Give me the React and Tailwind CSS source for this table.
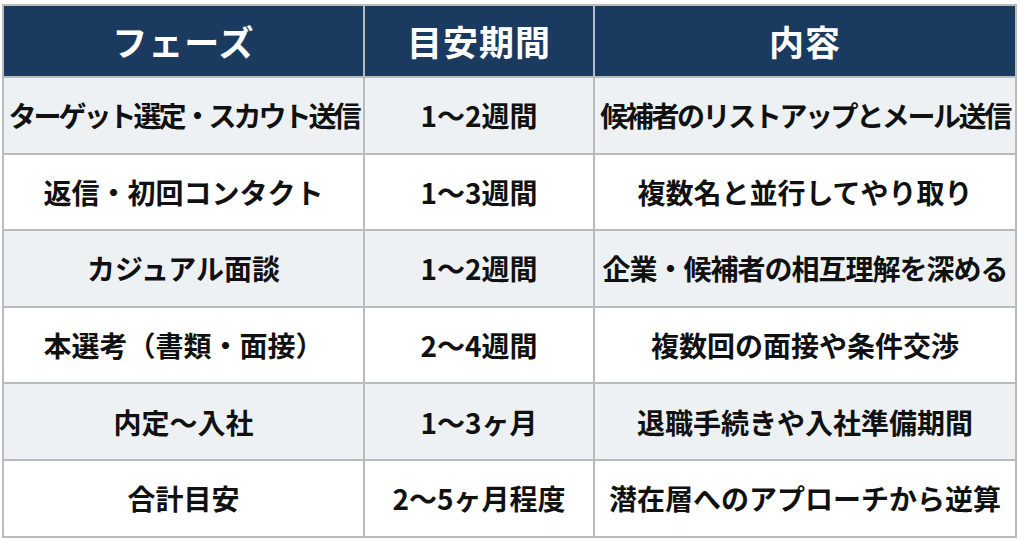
import React from "react";

const rows = [
  [
    ["ターゲット選定・スカウト送信", "tracking-[-3px]"],
    ["1〜2週間", ""],
    ["候補者のリストアップとメール送信", "tracking-[-2.4px]"],
  ],
  [
    ["返信・初回コンタクト", ""],
    ["1〜3週間", ""],
    ["複数名と並行してやり取り", ""],
  ],
  [
    ["カジュアル面談", ""],
    ["1〜2週間", ""],
    ["企業・候補者の相互理解を深める", "tracking-[-1px]"],
  ],
  [
    ["本選考（書類・面接）", ""],
    ["2〜4週間", ""],
    ["複数回の面接や条件交渉", ""],
  ],
  [
    ["内定〜入社", ""],
    ["1〜3ヶ月", ""],
    ["退職手続きや入社準備期間", ""],
  ],
  [
    ["合計目安", ""],
    ["2〜5ヶ月程度", ""],
    ["潜在層へのアプローチから逆算", ""],
  ],
];

export default function App() {
  return (
    <div
      className="w-[1024px] h-[539px] bg-white pt-[4px] pl-[2px] overflow-hidden"
      style={{ fontFamily: '"Noto Sans CJK JP", "Noto Sans", sans-serif' }}
    >
      <div className="w-[1015px] border-2 border-[#b9bcbf]">
        <div className="grid grid-cols-[361px_230px_420px] h-[70px] bg-[#1b3a5f] text-white font-bold text-[35px]">
          <div className="flex items-center justify-center border-r-2 border-[#b9bcbf] tracking-[1px]">フェーズ</div>
          <div className="flex items-center justify-center border-r-2 border-[#b9bcbf] tracking-[1px]">目安期間</div>
          <div className="flex items-center justify-center tracking-[1px]">内容</div>
        </div>
        {rows.map((r, i) => (
          <div
            key={i}
            className={
              "grid grid-cols-[361px_230px_420px] h-[76.6px] border-t-2 border-[#b9bcbf] text-[#111] font-bold text-[28px] " +
              (i % 2 === 0 ? "bg-[#eef1f4]" : "bg-white")
            }
          >
            <div className={"flex items-center justify-center border-r-2 border-[#b9bcbf] whitespace-nowrap " + r[0][1]}>{r[0][0]}</div>
            <div className={"flex items-center justify-center border-r-2 border-[#b9bcbf] whitespace-nowrap " + r[1][1]}>{r[1][0]}</div>
            <div className={"flex items-center justify-center whitespace-nowrap " + r[2][1]}>{r[2][0]}</div>
          </div>
        ))}
      </div>
    </div>
  );
}
